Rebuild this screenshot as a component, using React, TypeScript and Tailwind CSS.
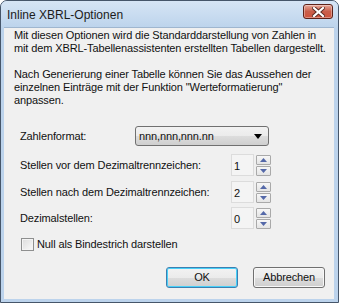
import { useState } from "react";

const Spin = () => (
  <div className="flex flex-col gap-[1px] ml-[2px] mt-[1px]">
    {["up", "down"].map((d) => (
      <div
        key={d}
        className="w-[15px] h-[10px] border border-[#a9a9a9] rounded-[1px] bg-gradient-to-b from-[#f7f7f7] to-[#e4e4e4] flex items-center justify-center"
      >
        <svg width="7" height="4" viewBox="0 0 7 4">
          {d === "up" ? (
            <path d="M0 4 L3.5 0 L7 4 Z" fill="#5468a8" />
          ) : (
            <path d="M0 0 L3.5 4 L7 0 Z" fill="#5468a8" />
          )}
        </svg>
      </div>
    ))}
  </div>
);

const NumRow = ({ label, value }: { label: string; value: string }) => (
  <div className="flex items-start h-[22px]">
    <span className="w-[211px] pt-[3px] whitespace-nowrap">{label}</span>
    <div className="w-[23px] h-[22px] border border-[#dcdcdc] bg-[#f4f4f4] pl-[2px] pt-[3px]">{value}</div>
    <Spin />
  </div>
);

const App = () => {
  const [checked, setChecked] = useState(false);
  return (
    <div className="w-[339px] h-[303px] flex flex-col bg-[#bcd3ec] border border-[#46566a] rounded-t-[7px] font-['Liberation_Sans',Arial,sans-serif] text-[11px] tracking-[-0.12px] text-[#111]">
      <div className="h-[26px] shrink-0 flex items-center justify-between pl-[6px] pr-[5px] rounded-t-[6px] bg-gradient-to-b from-[#d6e5f5] to-[#bdd4ec]">
        <span className="text-[12px] tracking-normal text-[#1b1b1b] mt-[1px]">Inline XBRL-Optionen</span>
        <div className="w-[30px] h-[15px] -mt-[5px] rounded-[3px] border border-[#5d2219] bg-gradient-to-b from-[#e7a799] via-[#c95e4a] to-[#d0533c] flex items-center justify-center shadow-[inset_0_0_0_1px_rgba(255,255,255,0.35)]">
          <svg width="13" height="10" viewBox="0 0 13 10">
            <path d="M2 1 L11 9 M11 1 L2 9" stroke="#5a2a22" strokeWidth="4" strokeLinecap="square" />
            <path d="M2 1 L11 9 M11 1 L2 9" stroke="#ffffff" strokeWidth="2.2" strokeLinecap="square" />
          </svg>
        </div>
      </div>

      <div className="flex-1 ml-[3px] mr-[4px] mb-[3px] bg-[#f0f0f0] border-t border-[#9fb6cf] flex flex-col">
        <div className="pl-[10px] pt-[1px] leading-[13px] whitespace-nowrap">
          <p>Mit diesen Optionen wird die Standarddarstellung von Zahlen in</p>
          <p>mit dem XBRL-Tabellenassistenten erstellten Tabellen dargestellt.</p>
          <p className="mt-[13px]">Nach Generierung einer Tabelle können Sie das Aussehen der</p>
          <p>einzelnen Einträge mit der Funktion "Werteformatierung"</p>
          <p>anpassen.</p>
        </div>

        <div className="pl-[16px] mt-[19px] flex items-center">
          <span className="w-[115px]">Zahlenformat:</span>
          <div className="w-[134px] h-[20px] rounded-[3px] border border-[#707070] flex items-center justify-between pl-[3px] pr-[6px] bg-[linear-gradient(#f2f2f2_0%,#ebebeb_50%,#dddddd_50%,#cfcfcf_100%)]">
            <span>nnn,nnn,nnn.nn</span>
            <svg width="8" height="5" viewBox="0 0 8 5">
              <path d="M0 0 L8 0 L4 5 Z" fill="#000" />
            </svg>
          </div>
        </div>

        <div className="pl-[16px] mt-[8px] flex flex-col gap-[4.5px]">
          <NumRow label="Stellen vor dem Dezimaltrennzeichen:" value="1" />
          <NumRow label="Stellen nach dem Dezimaltrennzeichen:" value="2" />
          <NumRow label="Dezimalstellen:" value="0" />
        </div>

        <label className="pl-[17px] mt-[7px] flex items-center gap-[3px]" onClick={() => setChecked(!checked)}>
          <span className="w-[13px] h-[13px] border border-[#8e8f8f] bg-gradient-to-br from-[#dcdcdc] to-[#fafafa] shadow-[inset_0_0_0_1px_#f4f4f4]" />
          <span>Null als Bindestrich darstellen</span>
        </label>

        <div className="mt-auto mb-[11px] flex justify-end gap-[15px] pr-[9px]">
          <button className="w-[72px] h-[21px] rounded-[3px] border border-[#3c7fb1] shadow-[inset_0_0_0_1px_#48d0f8] bg-[linear-gradient(#f2f2f2_0%,#ebebeb_50%,#dddddd_50%,#cfcfcf_100%)] text-[11px]">
            OK
          </button>
          <button className="w-[72px] h-[21px] rounded-[3px] border border-[#707070] shadow-[inset_0_0_0_1px_#f8f8f8] bg-[linear-gradient(#f2f2f2_0%,#ebebeb_50%,#dddddd_50%,#cfcfcf_100%)] text-[11px]">
            Abbrechen
          </button>
        </div>
      </div>
    </div>
  );
};

export default App;
